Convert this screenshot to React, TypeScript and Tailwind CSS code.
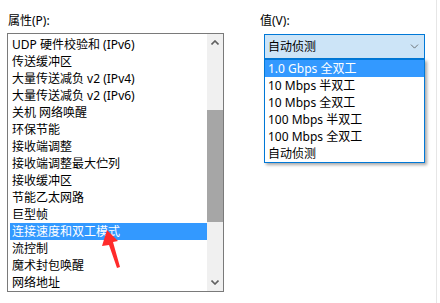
import { ChevronDown } from "lucide-react";

const properties = [
  "UDP 硬件校验和 (IPv6)",
  "传送缓冲区",
  "大量传送减负 v2 (IPv4)",
  "大量传送减负 v2 (IPv6)",
  "关机 网络唤醒",
  "环保节能",
  "接收端调整",
  "接收端调整最大伫列",
  "接收缓冲区",
  "节能乙太网路",
  "巨型帧",
  "连接速度和双工模式",
  "流控制",
  "魔术封包唤醒",
  "网络地址",
];

const speeds = [
  "1.0 Gbps 全双工",
  "10 Mbps 半双工",
  "10 Mbps 全双工",
  "100 Mbps 半双工",
  "100 Mbps 全双工",
  "自动侦测",
];

const ScrollArrow = ({ up }: { up?: boolean }) => (
  <div className="flex h-[17px] items-center justify-center">
    <svg width="8" height="5" viewBox="0 0 8 5" className={up ? "" : "rotate-180"}>
      <path d="M0.5 4.5 L4 1 L7.5 4.5" fill="none" stroke="#606060" strokeWidth="1.6" />
    </svg>
  </div>
);

const App = () => {
  const selected = "连接速度和双工模式";

  return (
    <div className="relative h-[303px] w-[440px] overflow-hidden bg-white font-['Noto_Sans','Noto_Sans_CJK_SC',sans-serif] text-[12px] text-black">
      <div className="flex h-full w-[437px] border-r border-[#e6e6e6]">
        {/* Properties list */}
        <div className="w-[260px] shrink-0 pl-[7px] pt-[12px]">
          <div className="h-[17px] pl-[1px] leading-[17px]">属性(P):</div>
          <div className="mt-[4px] flex h-[259px] w-[217px] border border-[#7a7a7a]">
            <ul className="flex-1 overflow-hidden pl-[2px] pt-[2px]">
              {properties.map((item) => (
                <li
                  key={item}
                  className={
                    item === selected
                      ? "h-[17px] whitespace-nowrap bg-[#3399ff] pl-[2px] leading-[17px] text-white"
                      : "h-[17px] whitespace-nowrap pl-[2px] leading-[17px]"
                  }
                >
                  {item}
                </li>
              ))}
            </ul>
            <div className="flex w-[16px] shrink-0 flex-col bg-[#f0f0f0]">
              <ScrollArrow up />
              <div className="h-[59px]" />
              <div className="h-[112px] bg-[#a6a6a6]" />
              <div className="flex-1" />
              <ScrollArrow />
            </div>
          </div>
        </div>

        {/* Value combo */}
        <div className="pt-[12px]">
          <div className="h-[17px] leading-[17px]">值(V):</div>
          <div className="relative ml-[4px] mt-[5px] w-[161px]">
            <div className="flex h-[25px] items-center justify-between border border-[#0078d7] bg-[#cce4f7] pl-[3px] pr-[3px]">
              <span className="leading-[17px]">自动侦测</span>
              <ChevronDown size={13} strokeWidth={1.3} className="text-[#444]" />
            </div>
            <ul className="absolute left-0 top-full w-[161px] border border-[#0078d7] bg-white shadow-[2px_2px_3px_rgba(0,0,0,0.35)]">
              {speeds.map((s, i) => (
                <li
                  key={s}
                  className={
                    i === 0
                      ? "h-[17px] whitespace-nowrap bg-[#3399ff] pl-[3px] leading-[17px] text-white"
                      : "h-[17px] whitespace-nowrap pl-[3px] leading-[17px]"
                  }
                >
                  {s}
                </li>
              ))}
            </ul>
          </div>
        </div>
      </div>

      {/* Red pointer arrow */}
      <svg className="absolute left-0 top-0" width="440" height="303">
        <polygon
          points="107,230 118,241 113,242 120,267 117,268 109,245 102,246"
          fill="#ff2b2b"
        />
      </svg>
    </div>
  );
};

export default App;
